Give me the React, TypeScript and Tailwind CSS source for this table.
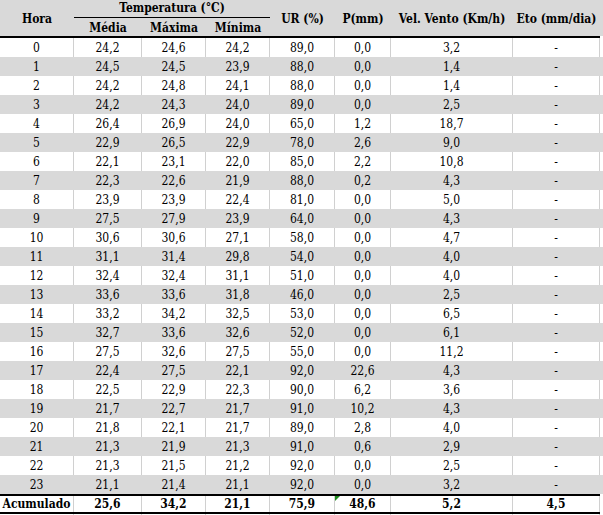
import React from "react";

const rows: string[][] = [
  ["0", "24,2", "24,6", "24,2", "89,0", "0,0", "3,2", "-"],
  ["1", "24,5", "24,5", "23,9", "88,0", "0,0", "1,4", "-"],
  ["2", "24,2", "24,8", "24,1", "88,0", "0,0", "1,4", "-"],
  ["3", "24,2", "24,3", "24,0", "89,0", "0,0", "2,5", "-"],
  ["4", "26,4", "26,9", "24,0", "65,0", "1,2", "18,7", "-"],
  ["5", "22,9", "26,5", "22,9", "78,0", "2,6", "9,0", "-"],
  ["6", "22,1", "23,1", "22,0", "85,0", "2,2", "10,8", "-"],
  ["7", "22,3", "22,6", "21,9", "88,0", "0,2", "4,3", "-"],
  ["8", "23,9", "23,9", "22,4", "81,0", "0,0", "5,0", "-"],
  ["9", "27,5", "27,9", "23,9", "64,0", "0,0", "4,3", "-"],
  ["10", "30,6", "30,6", "27,1", "58,0", "0,0", "4,7", "-"],
  ["11", "31,1", "31,4", "29,8", "54,0", "0,0", "4,0", "-"],
  ["12", "32,4", "32,4", "31,1", "51,0", "0,0", "4,0", "-"],
  ["13", "33,6", "33,6", "31,8", "46,0", "0,0", "2,5", "-"],
  ["14", "33,2", "34,2", "32,5", "53,0", "0,0", "6,5", "-"],
  ["15", "32,7", "33,6", "32,6", "52,0", "0,0", "6,1", "-"],
  ["16", "27,5", "32,6", "27,5", "55,0", "0,0", "11,2", "-"],
  ["17", "22,4", "27,5", "22,1", "92,0", "22,6", "4,3", "-"],
  ["18", "22,5", "22,9", "22,3", "90,0", "6,2", "3,6", "-"],
  ["19", "21,7", "22,7", "21,7", "91,0", "10,2", "4,3", "-"],
  ["20", "21,8", "22,1", "21,7", "89,0", "2,8", "4,0", "-"],
  ["21", "21,3", "21,9", "21,3", "91,0", "0,6", "2,9", "-"],
  ["22", "21,3", "21,5", "21,2", "92,0", "0,0", "2,5", "-"],
  ["23", "21,1", "21,4", "21,1", "92,0", "0,0", "3,2", "-"],
];

const acc = ["Acumulado", "25,6", "34,2", "21,1", "75,9", "48,6", "5,2", "4,5"];

const grid = "grid grid-cols-[74px_68px_64px_64px_65px_56px_122px_87px] w-[600px]";

export default function App() {
  return (
    <div className="w-[603px] h-[515px] bg-white text-black font-['DejaVu_Serif',serif] font-stretch-condensed text-[12px] overflow-hidden">
      {/* Header */}
      <div className="w-[603px] h-[36px] bg-[#d9d9d9] font-bold">
        <div className={`${grid} h-[36px] grid-rows-[18px_18px]`}>
          <div className="row-span-2 flex items-center justify-center pt-[1px]">Hora</div>
          <div className="col-span-3 flex items-center justify-center border-b border-black leading-none pb-[1px]">
            Temperatura (°C)
          </div>
          <div className="row-span-2 flex items-center justify-center pt-[1px]">UR (%)</div>
          <div className="row-span-2 flex items-center justify-center pt-[1px]">P(mm)</div>
          <div className="row-span-2 flex items-center justify-center pt-[1px] whitespace-nowrap">Vel. Vento (Km/h)</div>
          <div className="row-span-2 flex items-center justify-center pt-[1px] whitespace-nowrap">Eto (mm/dia)</div>
          <div className="flex items-center justify-center leading-none pt-[2px]">Média</div>
          <div className="flex items-center justify-center leading-none pt-[2px]">Máxima</div>
          <div className="flex items-center justify-center leading-none pt-[2px]">Mínima</div>
        </div>
      </div>
      <div className="w-[600px] h-[2px] bg-black" />
      {/* Data rows */}
      {rows.map((r, i) => {
        const gray = i % 2 === 1;
        return (
          <div key={i} className={`w-[603px] h-[19px] ${gray ? "bg-[#d9d9d9]" : "bg-white"}`}>
            <div className={`${grid} h-[19px]`}>
              {r.map((c, j) => (
                <div
                  key={j}
                  className={`h-[19px] leading-[20px] text-center border-r ${gray ? "border-[#d9d9d9]" : "border-[#d0d0d0]"}`}
                >
                  {c}
                </div>
              ))}
            </div>
          </div>
        );
      })}
      <div className="w-[600px] h-[2px] bg-black" />
      {/* Acumulado */}
      <div className={`${grid} h-[16px] font-bold`}>
        {acc.map((c, j) => (
          <div key={j} className="relative h-[16px] leading-[16px] text-center whitespace-nowrap border-r border-[#d0d0d0]">
            {j === 5 && (
              <span className="absolute left-0 top-0 w-0 h-0 border-t-[5px] border-t-[#1e8c1e] border-r-[5px] border-r-transparent" />
            )}
            {c}
          </div>
        ))}
      </div>
      <div className="w-[600px] h-[2px] bg-black" />
      <div className={`${grid} h-[3px]`}>
        {acc.map((_, j) => (
          <div key={j} className="h-[3px] border-r border-[#d0d0d0]" />
        ))}
      </div>
    </div>
  );
}
